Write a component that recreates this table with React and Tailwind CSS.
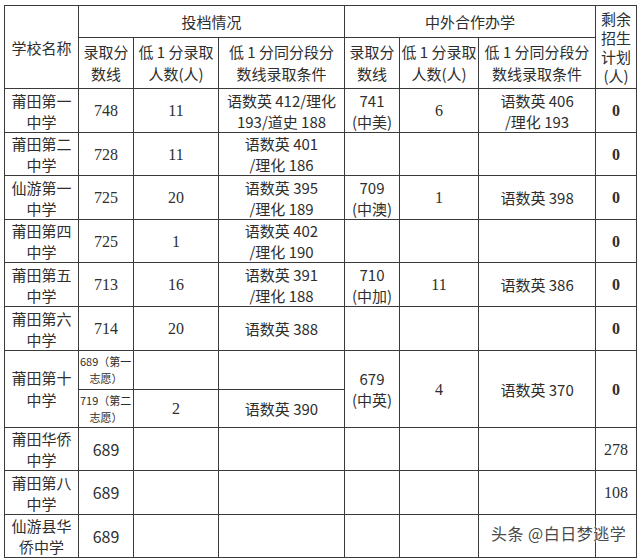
import React from 'react';

const cjk = "font-['Noto_Sans_CJK_SC',sans-serif]";
const num = "font-['Liberation_Serif','Noto_Sans_CJK_SC',serif]";

const td = 'border border-[#3a3a3a] p-0 text-center align-middle';

// rows below the header; missing fields stay empty
const rows = [
    {name: ['莆田第一', '中学'], score: '748', low: '11', cond: ['语数英 412/理化', '193/道史 188'], fScore: ['741', '(中美)'], fLow: '6', fCond: ['语数英 406', '/理化 193'], left: '0', h: 'h-[44px]'},
    {name: ['莆田第二', '中学'], score: '728', low: '11', cond: ['语数英 401', '/理化 186'], left: '0', h: 'h-[42px]'},
    {name: ['仙游第一', '中学'], score: '725', low: '20', cond: ['语数英 395', '/理化 189'], fScore: ['709', '(中澳)'], fLow: '1', fCond: ['语数英 398'], left: '0', h: 'h-[44px]'},
    {name: ['莆田第四', '中学'], score: '725', low: '1', cond: ['语数英 402', '/理化 190'], left: '0', h: 'h-[42px]'},
    {name: ['莆田第五', '中学'], score: '713', low: '16', cond: ['语数英 391', '/理化 188'], fScore: ['710', '(中加)'], fLow: '11', fCond: ['语数英 386'], left: '0', h: 'h-[44px]'},
    {name: ['莆田第六', '中学'], score: '714', low: '20', cond: ['语数英 388'], left: '0', h: 'h-[44px]'},
];

const tail = [
    {name: ['莆田华侨', '中学'], score: '689', left: '278', h: 'h-[43px]'},
    {name: ['莆田第八', '中学'], score: '689', left: '108', h: 'h-[44px]'},
    {name: ['仙游县华', '侨中学'], score: '689', h: 'h-[43px]'},
];

const Lines = ({lines}) => (lines ? lines.map((l, i) => <div key={i}>{l}</div>) : null);

const App = () => {
    return (
        <div className={`relative w-[640px] h-[560px] overflow-hidden bg-white pl-[4px] pt-[5px] text-[#2e2e2e] ${cjk}`}>
            <table className="table-fixed border-collapse w-[632px] text-[15px] leading-[21px]">
                <colgroup>
                    <col className="w-[74px]" />
                    <col className="w-[55px]" />
                    <col className="w-[85px]" />
                    <col className="w-[126px]" />
                    <col className="w-[55px]" />
                    <col className="w-[79px]" />
                    <col className="w-[117px]" />
                    <col className="w-[41px]" />
                </colgroup>
                <tbody>
                    <tr>
                        <td rowSpan={2} className={td}>学校名称</td>
                        <td colSpan={3} className={`${td} h-[32px]`}>投档情况</td>
                        <td colSpan={3} className={td}>中外合作办学</td>
                        <td rowSpan={2} className={`${td} leading-[19px]`}>
                            <div>剩余</div>
                            <div>招生</div>
                            <div>计划</div>
                            <div>(人)</div>
                        </td>
                    </tr>
                    <tr>
                        <td className={`${td} h-[51px] leading-[22px]`}><div>录取分</div><div>数线</div></td>
                        <td className={`${td} leading-[22px]`}><div className="whitespace-nowrap">低 1 分录取</div><div>人数(人)</div></td>
                        <td className={`${td} leading-[22px]`}><div className="whitespace-nowrap">低 1 分同分段分</div><div>数线录取条件</div></td>
                        <td className={`${td} leading-[22px]`}><div>录取分</div><div>数线</div></td>
                        <td className={`${td} leading-[22px]`}><div className="whitespace-nowrap">低 1 分录取</div><div>人数(人)</div></td>
                        <td className={`${td} leading-[22px]`}><div className="whitespace-nowrap">低 1 分同分段分</div><div>数线录取条件</div></td>
                    </tr>

                    {rows.map((r, i) => (
                        <tr key={i}>
                            <td className={`${td} ${r.h}`}><Lines lines={r.name} /></td>
                            <td className={`${td} ${num} text-[16px]`}>{r.score}</td>
                            <td className={`${td} ${num} text-[16px]`}>{r.low}</td>
                            <td className={td}><Lines lines={r.cond} /></td>
                            <td className={td}><Lines lines={r.fScore} /></td>
                            <td className={`${td} ${num} text-[16px]`}>{r.fLow}</td>
                            <td className={td}><Lines lines={r.fCond} /></td>
                            <td className={`${td} ${num} text-[16px] font-bold`}>{r.left}</td>
                        </tr>
                    ))}

                    <tr>
                        <td rowSpan={2} className={`${td} leading-[22px]`}><div>莆田第十</div><div>中学</div></td>
                        <td className={`${td} h-[39px] text-[11px] leading-[17px]`}>
                            <div className="whitespace-nowrap text-left pl-[1px]">689（第一</div>
                            <div>志愿）</div>
                        </td>
                        <td className={td}></td>
                        <td className={td}></td>
                        <td rowSpan={2} className={td}><div>679</div><div>(中英)</div></td>
                        <td rowSpan={2} className={`${td} ${num} text-[16px]`}>4</td>
                        <td rowSpan={2} className={td}>语数英 370</td>
                        <td rowSpan={2} className={`${td} ${num} text-[16px] font-bold`}>0</td>
                    </tr>
                    <tr>
                        <td className={`${td} h-[38px] text-[11px] leading-[17px]`}>
                            <div className="whitespace-nowrap text-left pl-[1px]">719（第二</div>
                            <div>志愿）</div>
                        </td>
                        <td className={`${td} ${num} text-[16px]`}>2</td>
                        <td className={td}>语数英 390</td>
                    </tr>

                    {tail.map((r, i) => (
                        <tr key={i}>
                            <td className={`${td} ${r.h}`}><Lines lines={r.name} /></td>
                            <td className={`${td} text-[16px]`}>{r.score}</td>
                            <td className={td}></td>
                            <td className={td}></td>
                            <td className={td}></td>
                            <td className={td}></td>
                            <td className={td}></td>
                            <td className={`${td} ${num} text-[16px]`}>{r.left}</td>
                        </tr>
                    ))}
                </tbody>
            </table>

            {/* watermark */}
            <div className="absolute left-[491px] top-[522px] text-[16px] leading-[22px] tracking-[0.5px] text-[#4a4a4a] whitespace-nowrap [text-shadow:0_0_2px_#fff,0_0_2px_#fff]">
                头条 @白日梦逃学
            </div>
        </div>
    );
};

export default App;
